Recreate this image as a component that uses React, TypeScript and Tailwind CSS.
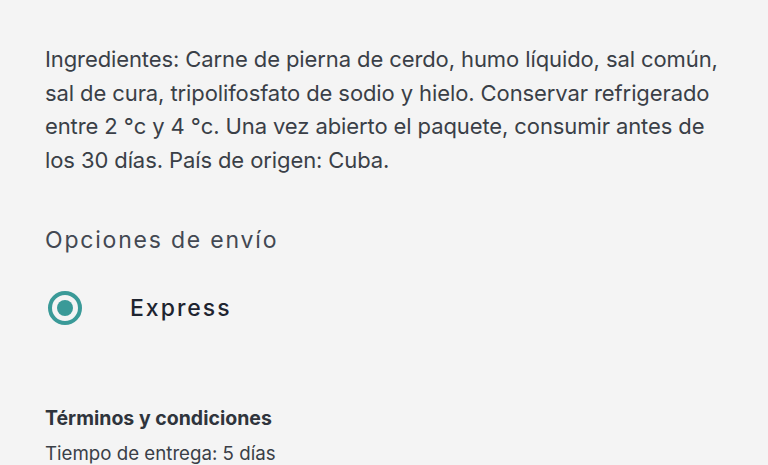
export default function App() {
  return (
    <div
      className="w-[768px] h-[465px] overflow-hidden bg-[#f4f4f4] px-[45px]"
      style={{ fontFamily: "Inter, 'Noto Sans', sans-serif" }}
    >
      <p className="pt-[43px] text-[22px] leading-[33.5px] text-[#3a3f47] tracking-[-0.1px] whitespace-nowrap">
        Ingredientes: Carne de pierna de cerdo, humo líquido, sal común,
        <br />
        sal de cura, tripolifosfato de sodio y hielo. Conservar refrigerado
        <br />
        entre 2 °c y 4 °c. Una vez abierto el paquete, consumir antes de
        <br />
        los 30 días. País de origen: Cuba.
      </p>
      <h2 className="mt-[48px] text-[23px] leading-[30px] tracking-[1.8px] text-[#434852] font-normal">
        Opciones de envío
      </h2>
      <div className="mt-[36px] flex items-center h-[34px]">
        <span className="ml-[3px] w-[34px] h-[34px] rounded-full border-[4px] border-[#3a9a98] flex items-center justify-center">
          <span className="w-[16px] h-[16px] rounded-full bg-[#3a9a98]" />
        </span>
        <span className="ml-[48px] text-[23px] tracking-[2px] text-[#1e2430] font-medium">Express</span>
      </div>
      <h3 className="mt-[79px] text-[19.5px] leading-[28px] font-bold text-[#2f343c]">Términos y condiciones</h3>
      <p className="mt-[8px] text-[18.7px] leading-[28px] text-[#3a3f47]">Tiempo de entrega: 5 días</p>
    </div>
  );
}
